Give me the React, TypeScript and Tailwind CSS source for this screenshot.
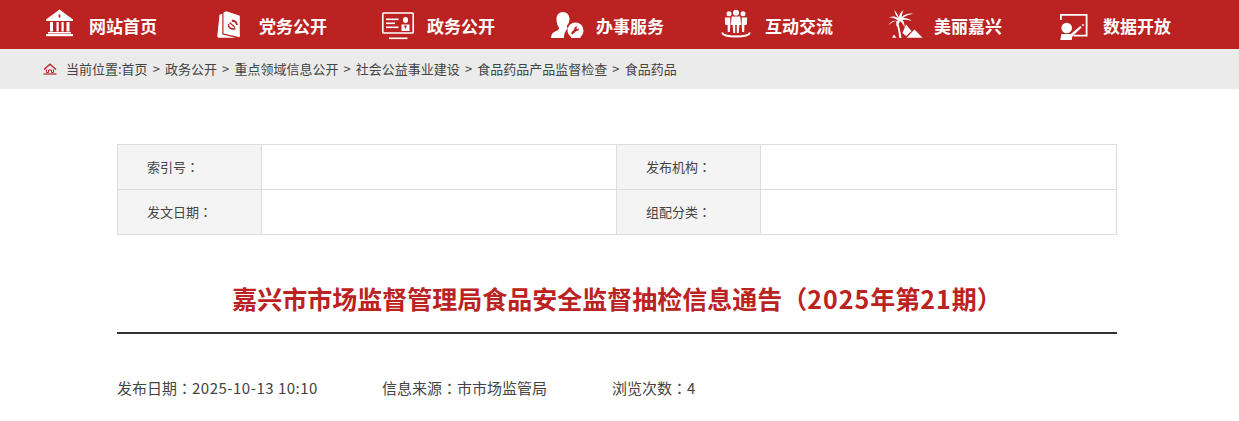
import React from "react";

const Bank = () => (
  <svg viewBox="0 0 40 40" className="w-10 h-10" fill="#fff">
    <path fillRule="evenodd" d="M19.500 4.500L33 14.500V16H6V14.500ZM18.600 9.500h1.800v3h-1.800Z" />
    <rect x="10" y="17" width="3" height="9.500" />
    <rect x="16.500" y="17" width="2.200" height="9.500" />
    <rect x="21.500" y="17" width="2.200" height="9.500" />
    <rect x="26.500" y="17" width="3" height="9.500" />
    <rect x="8" y="27" width="23" height="1.500" />
    <rect x="6" y="29" width="27" height="2.200" />
  </svg>
);

const Book = () => (
  <svg viewBox="0 0 40 40" className="w-10 h-10">
    <path fill="#fff" d="M13.500 7.500L16.500 6.300L29.800 10.800V32.300L13.500 28.500Z" />
    <path fill="#fff" d="M9.500 9.800L12.300 8.800V29.500L26 32.800H8L7.300 31.200Z" />
    <path fill="none" stroke="#bb2222" strokeWidth="1.400" d="M18.500 18.800c-.6 3.500 2.800 6.300 6.800 4.700" />
    <path fill="none" stroke="#bb2222" strokeWidth="1.200" d="M19.500 17.500l5.500 4.800" />
    <path fill="none" stroke="#bb2222" strokeWidth="1.800" d="M21.800 15.800c2.800-.4 5 1.400 5.200 4.200" />
  </svg>
);

const Monitor = () => (
  <svg viewBox="0 0 40 40" className="w-10 h-10" fill="#fff">
    <rect x="4.800" y="8" width="30.400" height="20" rx="0.800" fill="none" stroke="#fff" strokeWidth="1.600" />
    <rect x="8" y="13.500" width="12.500" height="1.600" />
    <rect x="8" y="17.500" width="9" height="1.600" />
    <rect x="8" y="21.500" width="12.500" height="1.600" />
    <ellipse cx="27.500" cy="15" rx="2.600" ry="3" />
    <path fillRule="evenodd" d="M23.500 19.500h8v6.500h-8ZM26 20.500l1.500 3.500 1.500-3.500Z" />
    <rect x="11" y="32.500" width="18.500" height="1.600" />
  </svg>
);

const Service = () => (
  <svg viewBox="0 0 40 40" className="w-10 h-10" fill="#fff">
    <path d="M16 7C20 7 22.500 10 22.500 14C22.500 17 21.200 19.300 20 20.500C19.500 21.800 20 22.500 21 23.200C18.500 25.200 17 28.500 16.800 33H4C4.200 29 5.800 27.300 8.500 26.300C11 25.300 12.300 24.300 12 22.500C10.500 20.500 9.500 18 9.500 14C9.500 10 12 7 16 7Z" />
    <path fillRule="evenodd" d="M28.500 17.500a8 8 0 0 1 8 8 8 8 0 0 1-3 6.300V33H24v-1.200a8 8 0 0 1-3.500-6.300 8 8 0 0 1 8-8ZM30.500 21.500c-2 -.5-3.500 1-3.200 2.800L24 28l1.500 1.500 3.800-3.400c1.800.3 3.200-1.300 2.800-3l-1.500 1.400-1.300-1.300Z" />
  </svg>
);

const People = () => (
  <svg viewBox="0 0 40 40" className="w-10 h-10" fill="#fff">
    <circle cx="13" cy="8.800" r="2.500" />
    <circle cx="20" cy="7.800" r="3" />
    <circle cx="27" cy="8.800" r="2.500" />
    <path d="M8.800 12.500h5.400l.2 7-.6 7.500H11.800l-.2-7h-1l-1.400-.5Z" />
    <path d="M15.700 11.500h8.600l.8 8.500h-1.800l-.5 8h-2V20h-1.600v8h-2l-.5-8h-1.800Z" />
    <path d="M25.800 12.500h5.400l-.4 7-1.400.5h-1l-.2 7h-2l-.6-7.500Z" />
    <path fill="none" stroke="#fff" strokeWidth="2" d="M6.500 27.500c-.5 2.500 5 4 13.500 4s14-1.500 13.500-4" />
  </svg>
);

const Palm = () => (
  <svg viewBox="0 0 40 40" className="w-10 h-10" fill="#fff">
    <path d="M12.500 16c1.800 5 3 10.500 4 17h-2.200c-.8-6.500-1.800-12-3.300-16.500Z" />
    <path d="M13.500 16.500C11 13.500 7.500 12 4 12.500C7 10.800 10.500 11.200 13 13C11 10.500 9.500 8 9.500 5C11.500 7.500 13 10 14 12.500C14.200 10 15.500 7 18.500 5C17.500 7.500 16.800 10 16.500 12C19.500 9.500 24 8 28 8.800C24 9.500 20.500 11 18 13C21 12.800 24.500 13.500 26.500 16C23.500 15 20.500 14.500 17.500 15C19 17 19.800 19.500 19.500 22.500C18.500 19.500 16.800 17.300 15 16C14.500 18 13 20 11 21.500C11.500 19.500 11.800 18 11.800 16C9 16 6 17.500 3.500 20.500C5 16.500 9.500 14.500 13.500 16.500Z" />
    <path d="M21 19.500L26.500 26L21 31L17.500 28Z" />
    <path d="M29.500 24.500L37.500 32.800H21.500Z" />
    <path d="M9 29.500L11.500 32.800H7Z" />
  </svg>
);

const Board = () => (
  <svg viewBox="0 0 40 40" className="w-10 h-10" fill="#fff">
    <path d="M6 15V9h27.500v22.500H19.500v-1.800H31.700V10.800H7.800V15Z" />
    <circle cx="12.700" cy="23" r="5.300" />
    <path d="M6.300 35l1-6h9.500l9.500-8 1.300 1.500-9.300 9-.5 3.500Z" />
    <path d="M27.800 20l1-1.300 1.300 1-1 1.500Z" />
  </svg>
);

const Home = () => (
  <svg viewBox="0 0 14 12" className="w-[14px] h-3" fill="none" stroke="#bb2222">
    <path d="M1 6.500L7 1.200l6 5.300" strokeWidth="1.300" />
    <path d="M3.500 6.500V9.500h2V7h3v2.500h2v-3" strokeWidth="1" />
    <path d="M0.500 11h13" strokeWidth="1.200" />
  </svg>
);

const nav: [React.FC, string, string][] = [
  [Bank, "网站首页", "w-[170px]"],
  [Book, "党务公开", "w-[168px]"],
  [Monitor, "政务公开", "w-[169px]"],
  [Service, "办事服务", "w-[169px]"],
  [People, "互动交流", "w-[169px]"],
  [Palm, "美丽嘉兴", "w-[169px]"],
  [Board, "数据开放", "w-[169px]"],
];

const crumbs = ["当前位置:首页", "政务公开", "重点领域信息公开", "社会公益事业建设", "食品药品产品监督检查", "食品药品"];

const P = ({ children }: { children: string }) => (
  <span className="font-['Noto_Sans_CJK_TC',sans-serif]">{children}</span>
);

const Label = ({ text, first }: { text: string; first?: boolean }) => (
  <div className={`h-full bg-[#f4f4f4] pl-[29px] flex items-center border-r border-[#dddddd] ${first ? "w-[145px] border-l" : "w-[144px]"}`}>
    <span>
      {text}
      <P>：</P>
    </span>
  </div>
);

export default function App() {
  return (
    <div className="w-[1239px] h-[421px] overflow-hidden bg-white text-[#333333] font-['Noto_Sans_CJK_SC','Noto_Sans',sans-serif]">
      <nav className="h-[49px] bg-[#bb2222] flex items-center pl-10">
        {nav.map(([Icon, label, w]) => (
          <div key={label} className={`${w} flex items-center shrink-0`}>
            <Icon />
            <span className="ml-[9px] mt-[2px] text-[17px] font-bold text-white leading-none">{label}</span>
          </div>
        ))}
      </nav>
      <div className="h-10 bg-[#ebebeb] flex items-center pl-[43px] text-[13px] text-[#444444]">
        <Home />
        <span className="ml-[9px] flex items-center">
          {crumbs.map((c, i) => (
            <span key={c} className="flex items-center">
              {i > 0 && <span className="w-[17.4px] text-center">&gt;</span>}
              <span>{c}</span>
            </span>
          ))}
        </span>
      </div>
      <main className="w-[1000px] ml-[117px]">
        <div className="mt-[55px] border-t border-b border-[#dddddd] text-[13px] text-[#444444]">
          <div className="h-[45px] flex border-b border-[#dddddd] items-center">
            <Label first text="索引号" />
            <div className="w-[355px] h-full border-r border-[#dddddd]" />
            <Label text="发布机构" />
            <div className="flex-1 h-full border-r border-[#dddddd]" />
          </div>
          <div className="h-[44px] flex items-center">
            <Label first text="发文日期" />
            <div className="w-[355px] h-full border-r border-[#dddddd]" />
            <Label text="组配分类" />
            <div className="flex-1 h-full border-r border-[#dddddd]" />
          </div>
        </div>
        <h1 className="mt-[43px] text-center text-[25px] leading-[40px] font-bold text-[#bb2222]">
          嘉兴市市场监督管理局食品安全监督抽检信息通告<P>（</P>
          <span className="tracking-[1px]">2025</span>年第<span className="tracking-[1px]">21</span>期<P>）</P>
        </h1>
        <div className="mt-[14px] h-0.5 bg-[#333333]" />
        <div className="mt-[44px] flex text-[15px] leading-5 text-[#444444]">
          <span className="w-[265px]">
            发布日期<P>：</P>
            <span className="tracking-[0.5px]">2025-10-13 10:10</span>
          </span>
          <span className="w-[230px]">
            信息来源<P>：</P>市市场监管局
          </span>
          <span>
            浏览次数<P>：</P>4
          </span>
        </div>
      </main>
    </div>
  );
}
